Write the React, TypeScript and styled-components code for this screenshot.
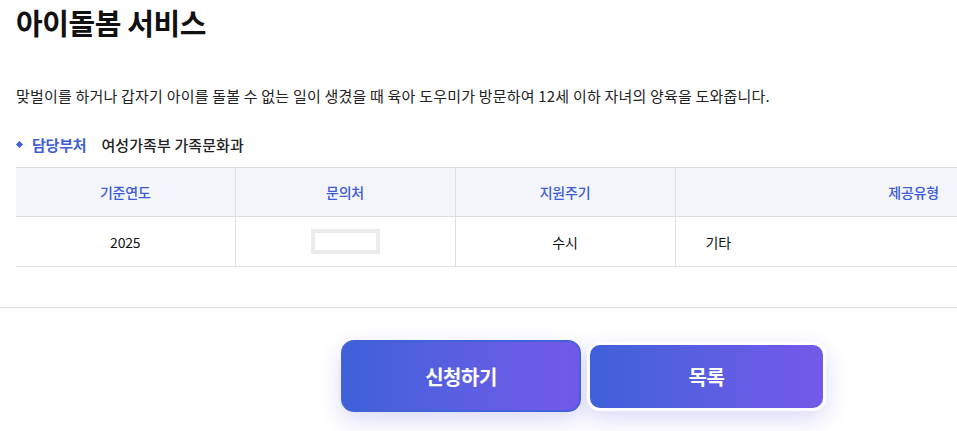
import React from "react";
import styled, { createGlobalStyle } from "styled-components";

const GlobalStyle = createGlobalStyle`
  html, body { margin: 0; padding: 0; background: #fff; }
  body {
    font-family: "Noto Sans CJK KR", "Noto Sans", "Liberation Sans", sans-serif;
    color: #222;
    overflow: hidden;
  }
  * { box-sizing: border-box; }
`;

const Page = styled.div`
  width: 957px;
  height: 431px;
  overflow: hidden;
`;

const Content = styled.section`
  padding-left: 16px;
`;

const Title = styled.h1`
  margin: 0;
  padding-top: 2px;
  font-size: 29px;
  line-height: 40px;
  font-weight: 700;
  letter-spacing: -0.4px;
  color: #111;
`;

const Description = styled.p`
  margin: 43px 0 0;
  font-size: 15px;
  line-height: 22px;
  letter-spacing: 0.2px;
  color: #222;
`;

const InfoRow = styled.div`
  display: flex;
  align-items: center;
  margin-top: 26px;
  height: 22px;
  font-size: 15px;
`;

const Bullet = styled.span`
  width: 5px;
  height: 5px;
  background: #3f5fd6;
  transform: rotate(45deg);
  margin: 0 10px 0 1px;
`;

const InfoLabel = styled.span`
  color: #3f5fd6;
  font-weight: 700;
  letter-spacing: -0.2px;
  margin-right: 15px;
`;

const InfoValue = styled.span`
  color: #222;
  font-weight: 500;
  letter-spacing: 0.1px;
`;

const Table = styled.table`
  margin-top: 12px;
  width: 941px;
  border-collapse: collapse;
  table-layout: fixed;
  font-size: 14px;
  letter-spacing: -0.2px;
`;

const HeadCell = styled.th<{ $align?: string; $last?: boolean; $first?: boolean }>`
  height: 49px;
  padding: 0 ${(p) => (p.$last ? "18px" : "0")} 0 0;
  background: #f4f5fa;
  color: #3b5bd8;
  font-weight: 500;
  text-align: ${(p) => p.$align || "center"};
  border-top: 1px solid #dedfe3;
  border-bottom: 1px solid #dedfe3;
  border-left: ${(p) => (p.$first ? "none" : "1px solid #dedfe3")};
`;

const BodyCell = styled.td<{ $align?: string; $first?: boolean }>`
  height: 50px;
  padding: 0 0 0 ${(p) => (p.$align === "left" ? "30px" : "0")};
  color: #111;
  font-weight: 400;
  text-align: ${(p) => p.$align || "center"};
  border-bottom: 1px solid #dedfe3;
  border-left: ${(p) => (p.$first ? "none" : "1px solid #dedfe3")};
`;

const Placeholder = styled.span`
  display: inline-block;
  vertical-align: middle;
  width: 69px;
  height: 25px;
  border: 4px solid #ebebeb;
  background: #fff;
`;

const Divider = styled.hr`
  margin: 40px 0 0;
  border: none;
  border-top: 1px solid #dcdcdc;
`;

const ButtonRow = styled.div`
  display: flex;
  justify-content: center;
  align-items: flex-start;
  gap: 6px;
  padding-left: 210px;
  margin-top: 32px;
`;

const ActionButton = styled.button<{ $primary?: boolean }>`
  display: flex;
  align-items: center;
  justify-content: center;
  width: ${(p) => (p.$primary ? "240px" : "239px")};
  height: ${(p) => (p.$primary ? "72px" : "69px")};
  margin-top: ${(p) => (p.$primary ? "0" : "2px")};
  border-radius: 13px;
  border: ${(p) => (p.$primary ? "2px solid #4262d8" : "3px solid #ffffff")};
  background: linear-gradient(90deg, #3f60d8 0%, #5b5fe2 50%, #7459e9 100%);
  box-shadow: 0 8px 22px rgba(88, 84, 210, 0.22);
  color: #fff;
  font-family: "Noto Sans CJK KR", "Noto Sans", sans-serif;
  font-size: 20px;
  font-weight: 700;
  letter-spacing: -0.5px;
  cursor: pointer;
`;

const columns = [
  { head: "기준연도", body: "2025" },
  { head: "문의처", body: null },
  { head: "지원주기", body: "수시" },
  { head: "제공유형", body: "기타" },
];

export default function App() {
  return (
    <Page>
      <GlobalStyle />
      <Content>
        <Title>아이돌봄 서비스</Title>
        <Description>
          맞벌이를 하거나 갑자기 아이를 돌볼 수 없는 일이 생겼을 때 육아 도우미가 방문하여 12세 이하 자녀의 양육을 도와줍니다.
        </Description>
        <InfoRow>
          <Bullet />
          <InfoLabel>담당부처</InfoLabel>
          <InfoValue>여성가족부 가족문화과</InfoValue>
        </InfoRow>
        <Table>
          <colgroup>
            <col style={{ width: 219 }} />
            <col style={{ width: 220 }} />
            <col style={{ width: 220 }} />
            <col />
          </colgroup>
          <thead>
            <tr>
              {columns.map((c, i) => (
                <HeadCell
                  key={c.head}
                  $first={i === 0}
                  $last={i === 3}
                  $align={i === 3 ? "right" : "center"}
                >
                  {c.head}
                </HeadCell>
              ))}
            </tr>
          </thead>
          <tbody>
            <tr>
              {columns.map((c, i) => (
                <BodyCell key={c.head} $first={i === 0} $align={i === 3 ? "left" : "center"}>
                  {c.body === null ? <Placeholder /> : c.body}
                </BodyCell>
              ))}
            </tr>
          </tbody>
        </Table>
      </Content>
      <Divider />
      <ButtonRow>
        <ActionButton $primary>신청하기</ActionButton>
        <ActionButton>목록</ActionButton>
      </ButtonRow>
    </Page>
  );
}
